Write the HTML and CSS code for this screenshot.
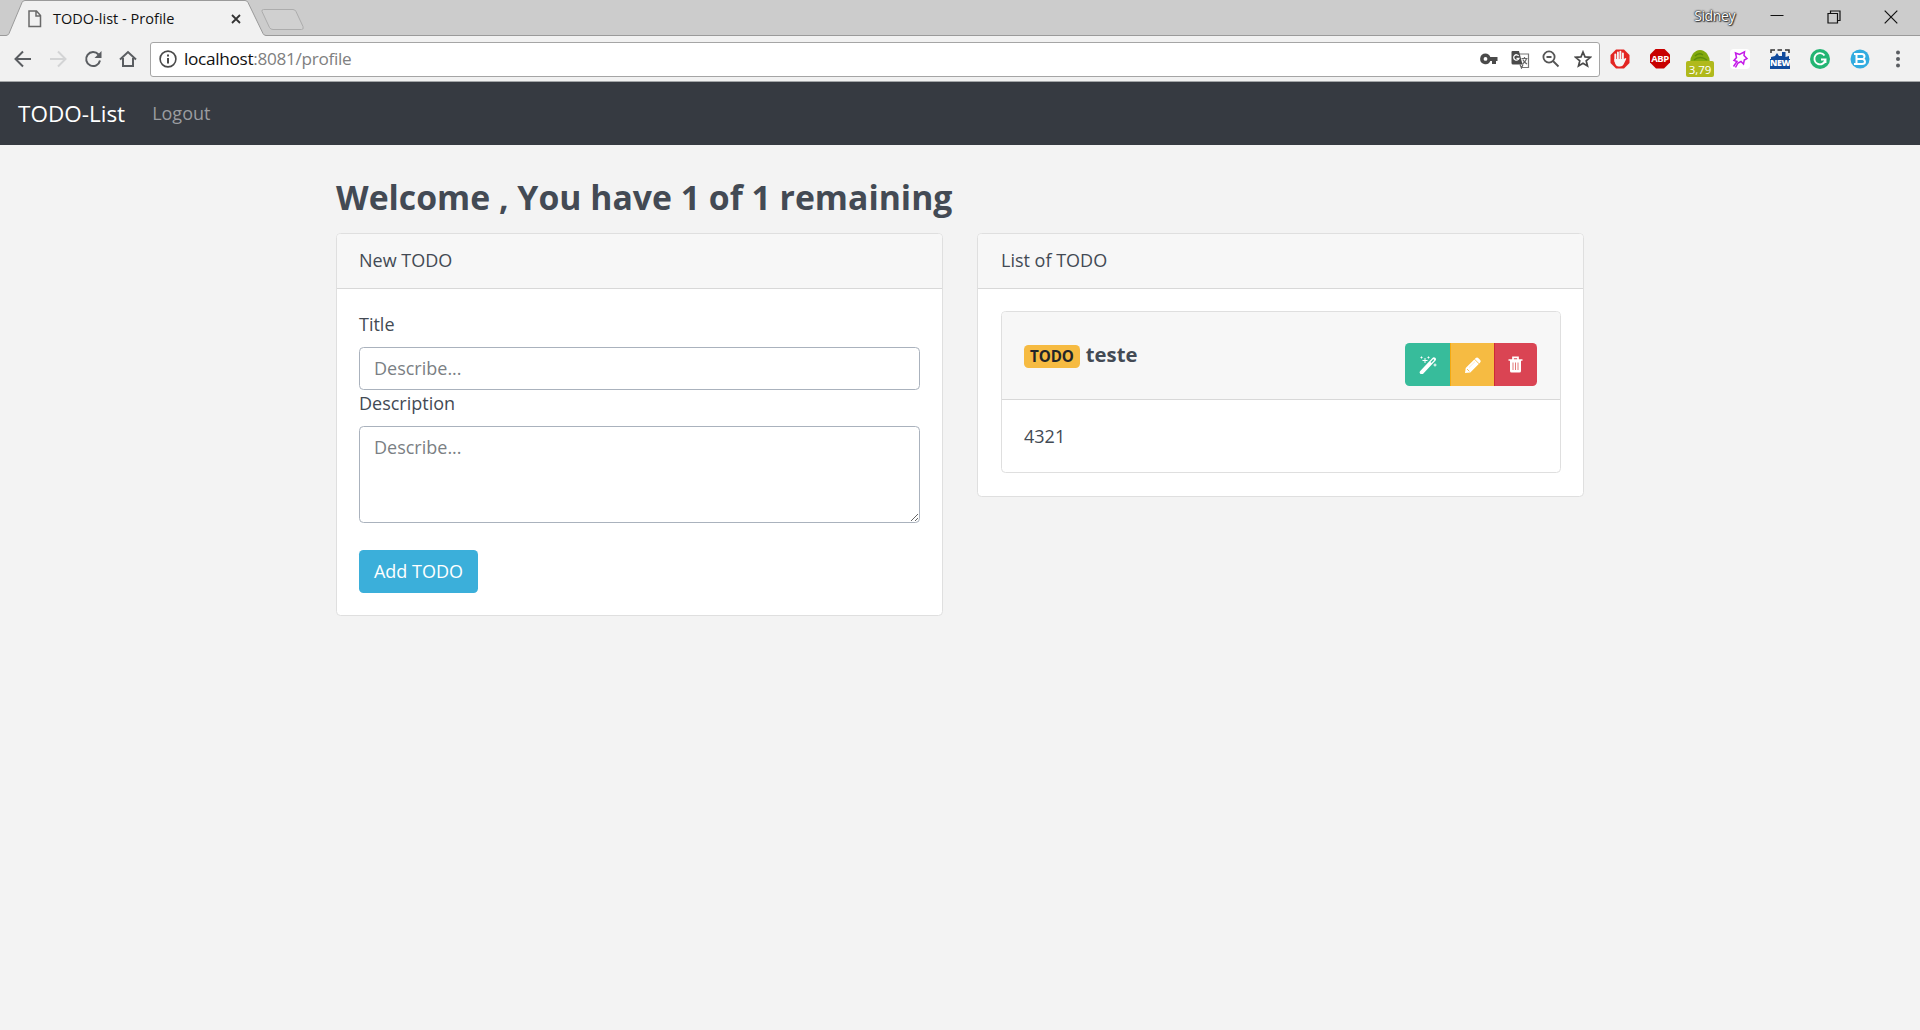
FILE: index.html
```html
<!DOCTYPE html>
<html lang="en">
<head>
<meta charset="utf-8">
<title>TODO-list - Profile</title>
<link rel="stylesheet" href="styles.css">
</head>
<body>
<header class="browser">
  <div class="tabstrip">
    <svg class="tab-shape" width="310" height="36" viewBox="0 0 310 36">
      <path d="M0 36V35.5H6Q8 35.5 9 33.500L22 2.500Q23 .5 25 .5H245Q247 .5 248 2.500L263 33.500Q264 35.500 266 35.500H310V36Z" fill="#f1f1f1"/>
      <path d="M0 35.500H6Q8 35.500 9 33.500L22 2.500Q23 .5 25 .5H245Q247 .5 248 2.500L263 33.500Q264 35.500 266 35.500H310" fill="none" stroke="#9a9a9a"/>
      <path d="M263.500 9.500H293Q295 9.500 296 11.500L303 26.500Q304 29.500 301.500 29.500H273Q270.500 29.500 269.500 27.500L262 11.500Q261.500 9.500 263.500 9.500Z" fill="#d0d0d0" stroke="#acacac"/>
    </svg>
    <div class="tab">
      <svg width="14" height="18" viewBox="0 0 14 18" fill="none" stroke="#6a6a6a" stroke-width="1.500"><path d="M1 1H8.500L12.500 5.500V16.500H1ZM8 1V6H12.500"/></svg>
      <span class="tab-title">TODO-list - Profile</span>
      <svg width="10" height="10" viewBox="0 0 10 10" fill="none" stroke="#333" stroke-width="1.800"><path d="M1 1L9 9M9 1L1 9"/></svg>
    </div>
    <div class="window-controls">
      <span class="user">Sidney</span>
      <svg width="14" height="14" viewBox="0 0 14 14" fill="none" stroke="#111"><path d="M.5 5.500H13.500"/></svg>
      <svg width="14" height="14" viewBox="0 0 14 14" fill="none" stroke="#111" stroke-width="1.200"><path d="M1 3.500H10.500V13H1ZM3.500 3.500V1H13V10.500H10.500"/></svg>
      <svg width="14" height="14" viewBox="0 0 14 14" fill="none" stroke="#111" stroke-width="1.200"><path d="M.7 .7L13.300 13.300M13.300 .7L.7 13.300"/></svg>
    </div>
  </div>
  <div class="toolbar">
    <div class="nav-icons">
      <svg width="18" height="18" viewBox="0 0 18 18" fill="none" stroke="#5a5d61" stroke-width="2"><path d="M17 9H2M9 1.500L1.500 9L9 16.500"/></svg>
      <svg width="18" height="18" viewBox="0 0 18 18" fill="none" stroke="#d3d4d5" stroke-width="2"><path d="M1 9H16M9 1.500L16.500 9L9 16.500"/></svg>
      <svg width="18" height="18" viewBox="0 0 18 18"><path d="M14.500 4.500A7 7 0 1 0 16 10.500" fill="none" stroke="#5a5d61" stroke-width="2"/><path d="M17.500 1V8H10.500Z" fill="#5a5d61"/></svg>
      <svg width="18" height="18" viewBox="0 0 18 18" fill="none" stroke="#5a5d61" stroke-width="2"><path d="M1 9.500L9 2L17 9.500M4 8V16H14V8"/></svg>
    </div>
    <div class="address">
      <svg width="18" height="18" viewBox="0 0 18 18"><circle cx="9" cy="9" r="7.900" fill="none" stroke="#4a4a4a" stroke-width="1.600"/><path d="M8 8H10V13.500H8ZM8 4.500H10V6.500H8Z" fill="#4a4a4a"/></svg>
      <span class="url"><span class="host">localhost</span>:8081/profile</span>
      <div class="address-icons">
        <svg width="18" height="12" viewBox="0 0 18 12"><path fill="#4a4a4a" fill-rule="evenodd" d="M5.500 .5A5.300 5.300 0 1 0 10.300 8H12V11H16V8H17.500V4H10.300A5.300 5.300 0 0 0 5.500 .5ZM5.500 4A1.900 1.900 0 1 1 5.500 7.800A1.900 1.900 0 0 1 5.500 4Z"/></svg>
        <svg width="19" height="19" viewBox="0 0 19 19"><path d="M8 4H17.500V17.500H10" fill="#fff" stroke="#777" stroke-width="1.200"/><path d="M1.500 1H8L11.500 14.500H2Q.5 14.500 .5 13V2Q.5 1 1.500 1Z" fill="#4a4a4a"/><path d="M7.700 6A2.700 2.700 0 1 0 8 8.300H5.500" fill="none" stroke="#fff" stroke-width="1.300"/><path d="M10.500 8.500H16.500M13.500 7V8.500M15.500 8.500Q14.500 12 11.500 14M11.800 9.500Q13 12 16 14M9 14.500L10.500 18L12 14.500" fill="none" stroke="#666" stroke-width="1.200"/></svg>
        <svg width="18" height="18" viewBox="0 0 18 18" fill="none" stroke="#555" stroke-width="1.800"><circle cx="7" cy="7" r="5.600"/><path d="M11 11L16.500 16.500M4.500 7H9.500"/></svg>
        <svg width="18" height="18" viewBox="0 0 18 18" fill="none" stroke="#4a4a4a" stroke-width="1.700"><path d="M9 2L11 6.900L16.400 7.300L12.200 10.800L13.500 16L9 13.200L4.500 16L5.800 10.800L1.600 7.300L7 6.900Z"/></svg>
      </div>
    </div>
    <div class="extensions">
      <svg width="20" height="20" viewBox="0 0 20 20"><path d="M6 .5H14L19.500 6V14L14 19.500H6L.5 14V6Z" fill="#e32522"/><path d="M5.300 5.500V12M7.900 3.500V11M10.400 2.800V11M12.900 4.500V12" stroke="#f5f5f5" stroke-width="1.900" stroke-linecap="round"/><path d="M4.400 10H13.900L15.500 9Q16.800 9 16 10.500L13.500 15.500Q12.500 17.500 10 17.500H8.500Q6.500 17.500 5.300 15Q4.400 13 4.400 10Z" fill="#f5f5f5"/></svg>
      <span class="abp">ABP</span>
      <span class="price"><svg width="20" height="14" viewBox="0 0 20 14"><path d="M0 14A10 13 0 0 1 20 14Z" fill="#82a90d"/><path d="M5 7Q9 3 13 6M4 11Q10 6 17 11" stroke="#5d8d0a" stroke-width="1.300" fill="none"/></svg><b class="price-tag">3,79</b></span>
      <svg width="20" height="20" viewBox="0 0 20 20"><rect width="20" height="20" rx="4" fill="#fff"/><path d="M3.500 17.500L7 12.500L4 11.500L6.500 8.500L5.500 4L9.500 5.500L14.500 2.800L14 6.500L17 9.500L14.300 11L13.500 15L11 12.500L8 14L5.500 18.500" fill="none" stroke="#c41ae8" stroke-width="1.500"/></svg>
      <span class="new"><svg width="20" height="10" viewBox="0 0 20 10"><path d="M1 4V1H5M7.500 1H12M15 1H19V4" fill="none" stroke="#333" stroke-width="1.500"/><path d="M1 10V8L5 7L7 4L9 7L12 7V3H15.500V8L19 7V10Z" fill="#114b9c"/></svg><b class="new-label">NEW</b></span>
      <svg width="20" height="20" viewBox="0 0 20 20"><circle cx="10" cy="10" r="10" fill="#23b573"/><path d="M14.500 6.500A5.600 5.600 0 1 0 15.500 10.500H11M15.500 10.500V14" fill="none" stroke="#fff" stroke-width="1.900"/></svg>
      <svg width="20" height="20" viewBox="0 0 20 20"><circle cx="10" cy="10" r="9.500" fill="#32ace0"/><path d="M4 5H12Q14.500 5 14.500 7.500Q14.500 9 13 10Q15 11 15 12.800Q15 15 12 15H4M6.500 5V15M6.500 10H13" fill="none" stroke="#fff" stroke-width="2"/></svg>
    </div>
    <svg class="menu" width="4" height="18" viewBox="0 0 4 18" fill="#5a5d61"><circle cx="2" cy="2.500" r="2"/><circle cx="2" cy="9" r="2"/><circle cx="2" cy="15.500" r="2"/></svg>
  </div>
</header>
<nav class="navbar">
  <a class="brand">TODO-List</a>
  <a class="nav-link">Logout</a>
</nav>
<main class="container">
  <h1 class="welcome">Welcome , You have 1 of 1 remaining</h1>
  <div class="columns">
    <section class="card">
      <div class="card-header">New TODO</div>
      <form class="card-body">
        <label class="label" for="title">Title</label>
        <input class="field" id="title" placeholder="Describe...">
        <label class="label" for="description">Description</label>
        <textarea class="field area" id="description" placeholder="Describe..."></textarea>
        <button class="btn add" type="button">Add TODO</button>
      </form>
    </section>
    <section class="card">
      <div class="card-header list-header">List of TODO</div>
      <div class="card-body list-body">
        <article class="card">
          <div class="card-header item-header">
            <h2 class="item-title"><span class="badge">TODO</span> <span class="item-name">teste</span></h2>
            <div class="actions">
              <button class="btn done" type="button" aria-label="Done"><svg width="18" height="18" viewBox="0 0 18 18"><path d="M2.700 16.300L14.900 3.300" stroke="#fff" stroke-width="4" stroke-linecap="round"/><path d="M12 6.500L14.800 3.500" stroke="#37bc9b" stroke-width="1.300"/><path d="M6 2V7M3.500 4.500H8.500M2.500 .5V2.500M1.500 1.500H3.500M9.500 .5V2.500M8.500 1.500H10.500M16 7.500V10.500M14.500 9H17.500" stroke="#fff"/></svg></button>
              <button class="btn edit" type="button" aria-label="Edit"><svg width="18" height="18" viewBox="0 0 18 18"><path d="M1 17L1.700 12L11.500 2.300Q13 .8 14.500 2.200L16.200 4Q17.500 5.300 16 6.700L6.300 16.500Z" fill="#fff"/><path d="M10.500 3.200L15.200 7.900M3 13L5.300 15.300" stroke="#f6bb42" stroke-width=".9"/><path d="M5 11.500L11 5.600" stroke="#fae0ad" stroke-width=".7"/></svg></button>
              <button class="btn remove" type="button" aria-label="Delete"><svg width="15" height="17" viewBox="0 0 15 17"><path d="M.5 4H14.500M5 3.500V1.300H10V3.500" fill="none" stroke="#fff" stroke-width="1.700"/><path d="M2 4H13V15Q13 16.500 11.500 16.500H3.500Q2 16.500 2 15Z" fill="#fff"/><path d="M5 6.500V14M7.500 6.500V14M10 6.500V14" stroke="#e27878"/></svg></button>
            </div>
          </div>
          <div class="card-body item-body">4321</div>
        </article>
      </div>
    </section>
  </div>
</main>
</body>
</html>
```
FILE: styles.css
```css
* { box-sizing: border-box; }
body { margin: 0; background: #f3f3f3; color: #434a54; font: 18px/27px "Open Sans", "Noto Sans", sans-serif; height: 1030px; overflow: hidden; }
svg { display: block; flex: none; }

.browser { height: 82px; background: #f1f1f1; border-bottom: 1px solid #a3a5a7; }
.tabstrip { position: relative; height: 36px; display: flex; justify-content: space-between; background: #ccc; border-bottom: 1px solid #9a9a9a; }
.tab-shape { position: absolute; left: 0; top: 0; }
.tab { position: relative; width: 241px; padding: 1px 0 0 28px; height: 36px; display: flex; align-items: center; }
.tab-title { margin-left: 11px; flex: 1; color: #111; font-size: 14.500px; letter-spacing: .02px; }
.window-controls { display: flex; align-items: center; height: 33px; padding-right: 22px; }
.window-controls svg + svg { margin-left: 43px; }
.user { margin: -2px 35px 0 0; color: #fff; font-size: 14px; letter-spacing: -.4px; text-shadow: 0 0 1px #222, 0 0 2px #222, 0 0 2px #444, 1px 1px 1px #444; }
.toolbar { height: 45px; display: flex; align-items: center; }
.nav-icons { display: flex; gap: 17px; padding-left: 14px; width: 150px; }
.address { width: 1450px; height: 35px; margin-top: 1px; padding: 0 7px 0 8px; display: flex; align-items: center; background: #fff; border: 1px solid #a5a5a5; border-radius: 3px; }
.url { margin: -2px 0 0 7px; color: #808080; font-size: 17.200px; letter-spacing: -.31px; }
.host { color: #111; }
.address-icons { margin-left: auto; display: flex; align-items: center; gap: 12.500px; }
.address-icons svg:last-child { margin-left: 1.500px; }
.extensions { display: flex; gap: 20px; margin-left: 10px; }
.abp, .new { width: 20px; height: 20px; color: #fff; font: bold 8px/20px "Open Sans", sans-serif; text-align: center; }
.abp { background: #c80000; clip-path: polygon(30% 0, 70% 0, 100% 30%, 100% 70%, 70% 100%, 30% 100%, 0 70%, 0 30%); font-size: 9.500px; letter-spacing: -.4px; }
.price { position: relative; width: 20px; height: 20px; }
.price-tag { position: absolute; left: -4px; top: 12px; width: 28px; height: 16px; border-radius: 2px; background: #b0b91c; color: #fff; font: 11.500px/17px "Open Sans", sans-serif; text-align: center; }
.new-label { display: block; height: 10px; background: #114b9c; font-size: 8.800px; line-height: 9px; letter-spacing: -.3px; }
.menu { margin-left: 26px; }

.navbar { height: 63px; padding: 0 18px; display: flex; align-items: center; background: #363a41; }
.brand { color: #fff; font-size: 22.500px; }
.nav-link { margin-left: 27px; color: #9b9da0; }

.container { width: 1248px; margin: 0 auto; padding-top: 31px; }
.welcome { margin: 0 0 14px; font-size: 33.750px; line-height: 43px; font-weight: 700; white-space: nowrap; }
.columns { display: grid; grid-template-columns: 1fr 1fr; gap: 34px; align-items: start; }
.card { background: #fff; border: 1px solid #dfdfdf; border-radius: 4.500px; }
.card-header { padding: 13px 22px 14px; background: #f7f7f7; border-bottom: 1px solid #d8d8d8; border-radius: 3.500px 3.500px 0 0; }
.card-body { padding: 22px; }
.label { display: block; margin-bottom: 9px; }
.field { display: block; width: 100%; height: 43px; padding: 6px 14px 8px; border: 1px solid #aab2bd; border-radius: 4.500px; background: #fff; color: #434a54; font: inherit; }
.field::placeholder { color: #7b7f84; opacity: 1; }
.area { height: 97px; padding-top: 7px; margin-bottom: 27px; resize: vertical; }
.btn { height: 43px; border: 0; color: #fff; font: inherit; display: flex; align-items: center; justify-content: center; }
.add { width: 119px; padding: 0; border-radius: 4.500px; background: #3bafda; }
.list-header, .list-body { padding-left: 23px; }
.item-header { height: 88px; display: flex; justify-content: space-between; padding: 30px 23px 0 22px; }
.item-title { margin: 0; height: 27px; font-size: 20.250px; line-height: 25px; font-weight: 700; display: flex; align-items: flex-start; gap: 6px; }
.badge { height: 23px; margin-top: 3px; padding: 0 6px; border-radius: 4.500px; background: #f6bb42; color: #212529; font-size: 15.200px; line-height: 23px; letter-spacing: -.1px; }
.actions { display: flex; height: 43px; margin-top: 1px; border-radius: 4.500px; overflow: hidden; }
.btn.done { width: 45px; background: #37bc9b; }
.btn.edit { width: 44px; background: #f6bb42; border-left: 1px solid #f4a911; }
.btn.remove { width: 43px; padding: 0 7px 0 6px; background: #da4453; border-left: 1px solid #ce2838; }
.item-body { padding: 23px 22px 22px; }
.list-body { padding-bottom: 23px; }
```
